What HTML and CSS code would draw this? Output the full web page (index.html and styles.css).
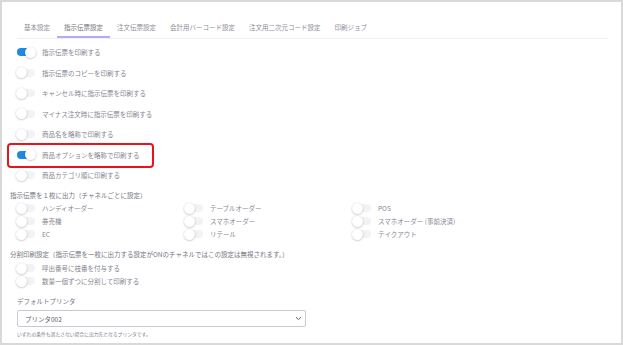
FILE: index.html
```html
<!DOCTYPE html>
<html lang="ja">
<head>
  <meta charset="UTF-8" />
  <title>プリンタ設定</title>
  <link rel="stylesheet" href="styles.css">
</head>
<body>
  <div class="frame">
    <nav class="tabs">
      <a class="tab">基本設定</a>
      <a class="tab active">指示伝票設定</a>
      <a class="tab">注文伝票設定</a>
      <a class="tab">会計用バーコード設定</a>
      <a class="tab">注文用二次元コード設定</a>
      <a class="tab">印刷ジョブ</a>
    </nav>

    <div class="options">
      <label class="row"><span class="switch on"></span>指示伝票を印刷する</label>
      <label class="row"><span class="switch"></span>指示伝票のコピーを印刷する</label>
      <label class="row"><span class="switch"></span>キャンセル時に指示伝票を印刷する</label>
      <label class="row"><span class="switch"></span>マイナス注文時に指示伝票を印刷する</label>
      <label class="row"><span class="switch"></span>商品名を略称で印刷する</label>
      <label class="row highlight"><span class="switch on"></span>商品オプションを略称で印刷する</label>
      <label class="row"><span class="switch"></span>商品カテゴリ順に印刷する</label>
    </div>

    <h4 class="section">指示伝票を１枚に出力（チャネルごとに設定）</h4>
    <div class="channels">
      <label class="row small"><span class="switch"></span>ハンディオーダー</label>
      <label class="row small"><span class="switch"></span>テーブルオーダー</label>
      <label class="row small"><span class="switch"></span>POS</label>
      <label class="row small"><span class="switch"></span>券売機</label>
      <label class="row small"><span class="switch"></span>スマホオーダー</label>
      <label class="row small"><span class="switch"></span>スマホオーダー (事前決済)</label>
      <label class="row small"><span class="switch"></span>EC</label>
      <label class="row small"><span class="switch"></span>リテール</label>
      <label class="row small"><span class="switch"></span>テイクアウト</label>
    </div>

    <h4 class="section second">分割印刷設定（指示伝票を一枚に出力する設定がONのチャネルではこの設定は無視されます。）</h4>
    <div class="split">
      <label class="row small"><span class="switch"></span>呼出番号に枝番を付与する</label>
      <label class="row small"><span class="switch"></span>数量一個ずつに分割して印刷する</label>
    </div>

    <div class="printer">
      <div class="printer-label">デフォルトプリンタ</div>
      <div class="select">
        <span>プリンタ002</span>
        <svg width="7" height="5" viewBox="0 0 7 5"><path d="M1 1.2 L3.5 3.6 L6 1.2" fill="none" stroke="#666" stroke-width="1"/></svg>
      </div>
      <p class="hint">いずれの条件も満たさない場合に出力先となるプリンタです。</p>
    </div>
  </div>
</body>
</html>
```

FILE: styles.css
```css
:root {
  --text: #85858f;
  --blue: #1e88e5;
  --line: #f0f0f6;
}
* { box-sizing: border-box; margin: 0; padding: 0; }
html, body { width: 623px; height: 345px; overflow: hidden; }
body {
  font-family: "Noto Sans CJK JP", "Noto Sans", sans-serif;
  color: var(--text);
  background: #fff;
}
.frame {
  width: 623px;
  height: 345px;
  border: 2px solid #d9d9d9;
  padding: 15px 13px 0 8px;
}
.tabs {
  display: flex;
  margin-left: 7px;
  height: 22px;
  border-bottom: 1px solid var(--line);
}
.tab {
  padding: 0 7px;
  font-size: 6.5px;
  line-height: 21px;
  color: #8e8e98;
  white-space: nowrap;
}
.tab.active {
  color: #73737e;
  border-bottom: 2px solid #b3adf0;
}
.options {
  margin-top: 2.75px;
  padding-left: 7px;
}
.row {
  position: relative;
  display: flex;
  align-items: center;
  gap: 7px;
  height: 20.5px;
  font-size: 6.5px;
  white-space: nowrap;
}
.row.small { height: 13px; }
.highlight::after {
  content: "";
  position: absolute;
  left: -10px;
  top: -1px;
  width: 143px;
  height: 21px;
  border: 2px solid #e8141c;
  border-radius: 4px;
}
.switch {
  position: relative;
  flex: none;
  width: 18px;
  height: 8px;
  border-radius: 4px;
  background: #f3f3f5;
}
.switch::after {
  content: "";
  position: absolute;
  left: -1px;
  top: -1.5px;
  width: 11px;
  height: 11px;
  border-radius: 50%;
  background: #fff;
  box-shadow: 0 0.5px 2px rgba(0,0,0,0.3);
}
.switch.on { background: var(--blue); }
.switch.on::after { left: 8px; }
.section {
  font-weight: normal;
  font-size: 6.5px;
  line-height: 10px;
  color: #74747f;
  margin-top: 5px;
}
.channels {
  display: grid;
  grid-template-columns: 168px 168px 1fr;
  padding-left: 7px;
  margin-top: 1.25px;
}
.section.second { margin-top: 8.5px; }
.split {
  padding-left: 7px;
  margin-top: 2.5px;
}
.printer {
  padding-left: 7px;
  margin-top: 8.5px;
}
.printer-label {
  font-size: 6.5px;
  line-height: 10px;
  color: #74747f;
}
.select {
  margin-top: 4px;
  width: 289px;
  height: 17px;
  border: 1px solid #c9c9d6;
  border-radius: 2px;
  display: flex;
  align-items: center;
  justify-content: space-between;
  padding: 0 3px 0 7px;
  font-size: 6.5px;
  color: #5c5c66;
}
.hint {
  margin-top: 2.5px;
  font-size: 4.8px;
  line-height: 7px;
  color: #7b7b86;
}
```
